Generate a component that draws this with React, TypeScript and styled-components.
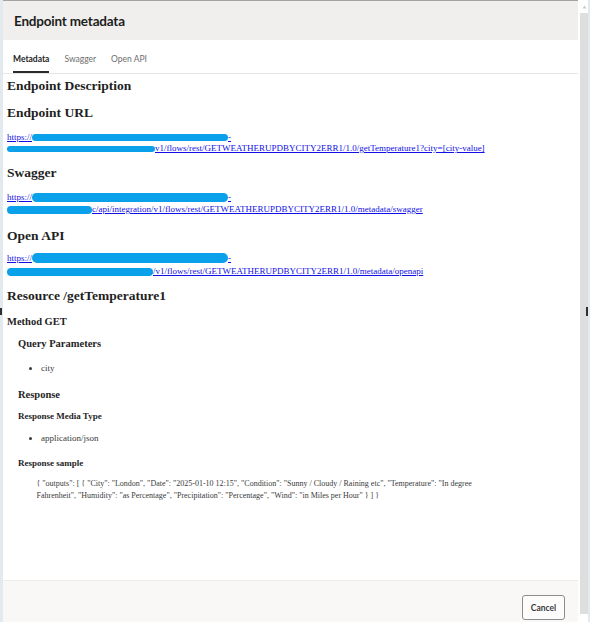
import React from "react";
import styled, { createGlobalStyle } from "styled-components";

const Global = createGlobalStyle`
  html, body { margin: 0; padding: 0; }
  body { background: #e5ebee; }
`;

const Frame = styled.div`
  display: flex;
  width: 590px;
  height: 622px;
  overflow: hidden;
`;

const SideStrip = styled.div`
  position: relative;
  width: 3px;
  flex: none;
  background: #e3eaed;
`;

const Grip = styled.span<{ $top: number; $h: number; $side: "left" | "right" }>`
  position: absolute;
  ${(p) => p.$side}: 0;
  top: ${(p) => p.$top}px;
  width: 2px;
  height: ${(p) => p.$h}px;
  background: #2f2f2f;
`;

const Dialog = styled.div`
  width: 575px;
  flex: none;
  display: flex;
  flex-direction: column;
  background: #ffffff;
  border-top: 1px solid #a2a2a2;
  box-sizing: border-box;
`;

const Header = styled.div`
  height: 39px;
  flex: none;
  display: flex;
  align-items: center;
  padding-left: 11px;
  background: #f0efed;
`;

const Title = styled.h1`
  margin: 0;
  font-family: Lato, "Noto Sans", sans-serif;
  font-weight: 700;
  font-size: 13.5px;
  letter-spacing: -0.2px;
  color: #1d1d1d;
`;

const TabBar = styled.div`
  height: 33px;
  flex: none;
  display: flex;
  gap: 15px;
  padding-left: 10px;
  border-bottom: 1px solid #e6e6e6;
`;

const Tab = styled.div<{ $active?: boolean }>`
  box-sizing: border-box;
  height: 33px;
  padding-top: 13px;
  font-family: Lato, "Noto Sans", sans-serif;
  font-size: 8.5px;
  line-height: 13px;
  font-weight: ${(p) => (p.$active ? 700 : 400)};
  color: ${(p) => (p.$active ? "#252525" : "#6e6e6e")};
  border-bottom: 2px solid ${(p) => (p.$active ? "#2a2a2a" : "transparent")};
`;

const Content = styled.div`
  flex: 1;
  display: flex;
  flex-direction: column;
  padding: 0 4px;
  font-family: "Liberation Serif", "Times New Roman", serif;
  color: #222;
`;

const H2 = styled.h2<{ $mt: number }>`
  margin: ${(p) => p.$mt}px 0 0;
  font-size: 13.5px;
  line-height: 16px;
  font-weight: 700;
  color: #1f1f1f;
`;

const H3 = styled.h3<{ $mt: number }>`
  margin: ${(p) => p.$mt}px 0 0;
  font-size: 10.5px;
  line-height: 12px;
  font-weight: 700;
  color: #1f1f1f;
`;

const H4 = styled.h4<{ $mt: number }>`
  margin: ${(p) => p.$mt}px 0 0;
  font-size: 9px;
  line-height: 11px;
  font-weight: 700;
  color: #1f1f1f;
`;

const LinkBlock = styled.div<{ $mt: number; $lh: number }>`
  margin-top: ${(p) => p.$mt}px;
  font-size: 9px;
  line-height: ${(p) => p.$lh}px;
  white-space: nowrap;
`;

const Link = styled.a`
  color: #1010e6;
  text-decoration: underline;
`;

const Redact = styled.span<{ $w: number; $h: number }>`
  display: inline-block;
  width: ${(p) => p.$w}px;
  height: ${(p) => p.$h}px;
  vertical-align: middle;
  border-radius: ${(p) => p.$h / 2}px;
  background: #0aa1ea;
`;

const Indent = styled.div`
  display: flex;
  flex-direction: column;
  padding-left: 11px;
`;

const List = styled.ul<{ $mt: number }>`
  margin: ${(p) => p.$mt}px 0 0;
  padding-left: 23px;
  font-size: 9px;
  line-height: 11px;
  color: #3a3a3a;
  list-style: disc;
`;

const Sample = styled.div`
  margin-top: 9px;
  margin-left: 18.5px;
  width: 452px;
  font-size: 8px;
  line-height: 12px;
  color: #3a3a3a;
`;

const Footer = styled.div`
  height: 42px;
  flex: none;
  display: flex;
  justify-content: flex-end;
  align-items: flex-start;
  box-sizing: border-box;
  padding: 14px 13px 0 0;
  border-top: 1px solid #ebebeb;
  background: #f9f8f7;
`;

const Button = styled.button`
  width: 43px;
  height: 25px;
  padding: 0;
  border: 1px solid #8c8c8c;
  border-radius: 3px;
  background: #fcfcfc;
  font-family: Lato, "Noto Sans", sans-serif;
  font-size: 8.5px;
  font-weight: 700;
  color: #3a3a3a;
`;

const ScrollColumn = styled.div`
  position: relative;
  width: 12px;
  flex: none;
  display: flex;
  flex-direction: column;
  box-sizing: border-box;
  background: #ffffff;
  border-right: 2px solid #e3eaed;
`;

const ArrowCell = styled.div`
  height: 13px;
  flex: none;
  display: flex;
  justify-content: center;
  align-items: center;
  padding-left: 2px;
`;

const Track = styled.div`
  flex: 1;
  margin: 0 0 8px 2px;
  background: #dedede;
`;

const json =
  '{ "outputs": [ { "City": "London", "Date": "2025-01-10 12:15", "Condition": "Sunny / Cloudy / Raining etc", "Temperature": "In degree Fahrenheit", "Humidity": "as Percentage", "Precipitation": "Percentage", "Wind": "in Miles per Hour" } ] }';

export default function App() {
  return (
    <>
      <Global />
      <Frame>
        <SideStrip>
          <Grip $side="left" $top={308} $h={7} />
        </SideStrip>
        <Dialog>
          <Header>
            <Title>Endpoint metadata</Title>
          </Header>
          <TabBar>
            <Tab $active>Metadata</Tab>
            <Tab>Swagger</Tab>
            <Tab>Open API</Tab>
          </TabBar>
          <Content>
            <H2 $mt={3.5}>Endpoint Description</H2>
            <H2 $mt={11}>Endpoint URL</H2>
            <LinkBlock $mt={11.5} $lh={11}>
              <Link href="#">
                https://<Redact $w={196} $h={7} />-
                <br />
                <Redact $w={148} $h={6} />
                v1/flows/rest/GETWEATHERUPDBYCITY2ERR1/1.0/getTemperature1?city=[city-value]
              </Link>
            </LinkBlock>
            <H2 $mt={10.5}>Swagger</H2>
            <LinkBlock $mt={10} $lh={12.5}>
              <Link href="#">
                https://<Redact $w={196} $h={9} />-
                <br />
                <Redact $w={85} $h={8} />
                c/api/integration/v1/flows/rest/GETWEATHERUPDBYCITY2ERR1/1.0/metadata/swagger
              </Link>
            </LinkBlock>
            <H2 $mt={12}>Open API</H2>
            <LinkBlock $mt={8} $lh={13.5}>
              <Link href="#">
                https://<Redact $w={196} $h={10} />-
                <br />
                <Redact $w={146} $h={8} />
                /v1/flows/rest/GETWEATHERUPDBYCITY2ERR1/1.0/metadata/openapi
              </Link>
            </LinkBlock>
            <H2 $mt={9}>Resource /getTemperature1</H2>
            <H3 $mt={12}>Method GET</H3>
            <Indent>
              <H3 $mt={10.5}>Query Parameters</H3>
              <List $mt={12.5}>
                <li>city</li>
              </List>
              <H3 $mt={15.5}>Response</H3>
              <H4 $mt={10}>Response Media Type</H4>
              <List $mt={10.5}>
                <li>application/json</li>
              </List>
              <H4 $mt={14}>Response sample</H4>
              <Sample>{json}</Sample>
            </Indent>
          </Content>
          <Footer>
            <Button>Cancel</Button>
          </Footer>
        </Dialog>
        <ScrollColumn>
          <ArrowCell>
            <svg width="5" height="4" viewBox="0 0 5 4">
              <path d="M2.5 0.5 L4.5 3.5 L0.5 3.5 Z" fill="#c9c9c9" />
            </svg>
          </ArrowCell>
          <Track />
          <Grip $side="right" $top={307} $h={9} />
        </ScrollColumn>
      </Frame>
    </>
  );
}
